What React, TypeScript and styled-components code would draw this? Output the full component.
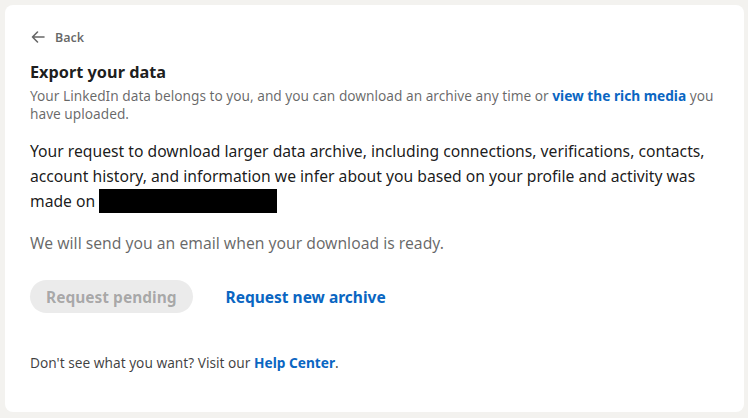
import React from 'react'
import styled, { createGlobalStyle } from 'styled-components'

const GlobalStyle = createGlobalStyle`
  html, body {
    margin: 0;
    padding: 0;
    background: #f3f2ef;
  }
  body {
    font-family: 'Noto Sans', 'Open Sans', sans-serif;
    -webkit-font-smoothing: antialiased;
  }
`

const Page = styled.div`
  padding: 5px 4px 6px 5px;
`

const Card = styled.section`
  background: #fff;
  border-radius: 8px;
  height: 407px;
  box-sizing: border-box;
  padding: 22px 25px 0 25px;
  display: flex;
  flex-direction: column;
`

const BackButton = styled.button`
  display: flex;
  align-items: center;
  gap: 9px;
  padding: 0;
  border: none;
  background: transparent;
  color: rgba(0, 0, 0, 0.6);
  font-family: inherit;
  font-size: 12.5px;
  font-weight: 600;
  height: 20px;
  cursor: pointer;
  align-self: flex-start;
`

const Title = styled.h1`
  margin: 14px 0 0;
  font-size: 16.3px;
  line-height: 22px;
  font-weight: 700;
  color: rgba(0, 0, 0, 0.9);
`

const Subtitle = styled.p`
  margin: 4px 0 0;
  font-size: 13.7px;
  line-height: 18px;
  color: rgba(0, 0, 0, 0.6);
`

const Link = styled.a`
  color: #0a66c2;
  font-weight: 700;
  text-decoration: none;
`

const Body = styled.p<{ $muted?: boolean }>`
  margin: ${p => (p.$muted ? '17px 0 0' : '16px 0 0')};
  font-size: 15.7px;
  line-height: 25px;
  color: ${p => (p.$muted ? 'rgba(0, 0, 0, 0.6)' : 'rgba(0, 0, 0, 0.9)')};
`

const Redacted = styled.span`
  display: inline-block;
  width: 178px;
  height: 24px;
  background: #000;
  vertical-align: -6px;
`

const Actions = styled.div`
  display: flex;
  align-items: center;
  gap: 33px;
  margin-top: 24px;
`

const PillButton = styled.button`
  height: 33px;
  padding: 0 16px;
  border: none;
  border-radius: 17px;
  background: #ebebeb;
  color: rgba(0, 0, 0, 0.3);
  font-family: inherit;
  font-size: 15.5px;
  font-weight: 700;
`

const TextButton = styled.button`
  padding: 0;
  border: none;
  background: transparent;
  color: #0a66c2;
  font-family: inherit;
  font-size: 15.5px;
  font-weight: 700;
  cursor: pointer;
`

const Footer = styled.p`
  margin: 41px 0 0;
  font-size: 13.7px;
  line-height: 18px;
  color: rgba(0, 0, 0, 0.75);
`

const BackArrow = () => (
  <svg width="16" height="16" viewBox="0 0 16 16" fill="none" stroke="currentColor" strokeWidth="1.6" strokeLinecap="round" strokeLinejoin="round">
    <path d="M14 8H2.5M7.5 3 2.5 8l5 5" />
  </svg>
)

export default function App() {
  return (
    <Page>
      <GlobalStyle />
      <Card>
        <BackButton>
          <BackArrow />
          Back
        </BackButton>

        <Title>Export your data</Title>
        <Subtitle>
          Your LinkedIn data belongs to you, and you can download an archive any time or{' '}
          <Link href="#">view the rich media</Link> you have uploaded.
        </Subtitle>

        <Body>
          Your request to download larger data archive, including connections, verifications, contacts,
          account history, and information we infer about you based on your profile and activity was
          made on <Redacted />
        </Body>
        <Body $muted>We will send you an email when your download is ready.</Body>

        <Actions>
          <PillButton disabled>Request pending</PillButton>
          <TextButton>Request new archive</TextButton>
        </Actions>

        <Footer>
          Don't see what you want? Visit our <Link href="#">Help Center</Link>.
        </Footer>
      </Card>
    </Page>
  )
}
